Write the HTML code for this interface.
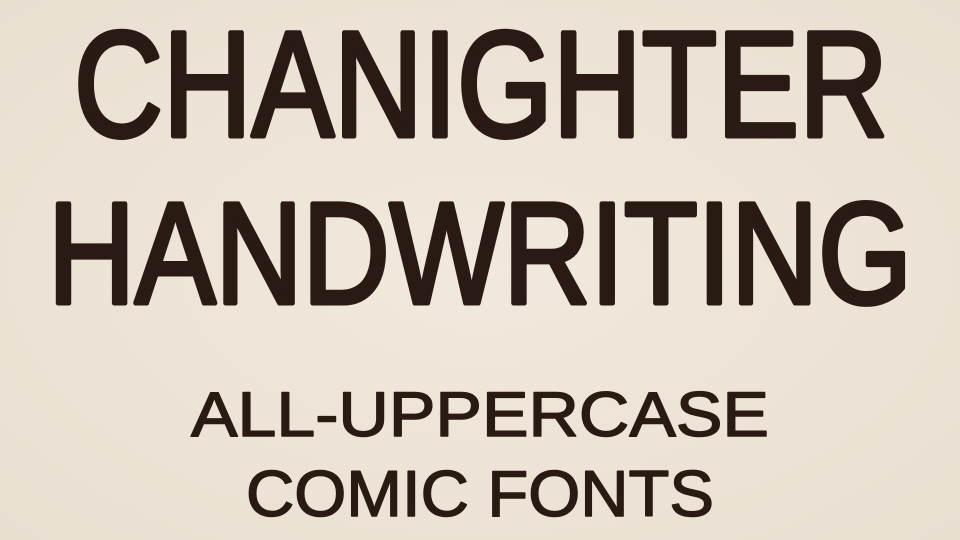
<!DOCTYPE html>
<html><head><meta charset="utf-8"><style>
html,body{margin:0;padding:0;width:960px;height:540px;overflow:hidden;background:#eee5d8}
svg{display:block}
</style></head><body>
<svg width="960" height="540" viewBox="0 0 960 540" xmlns="http://www.w3.org/2000/svg">
<defs>
<radialGradient id="g" cx="50%" cy="50%" r="70%">
<stop offset="0" stop-color="#f1e9dd"/><stop offset="1" stop-color="#e9dfd1"/>
</radialGradient>
</defs>
<rect width="960" height="540" fill="url(#g)"/>
<g font-family="Liberation Sans, sans-serif" fill="#2a1a14" stroke="#2a1a14" stroke-linejoin="round" stroke-linecap="round">
<text x="74" y="136" font-size="150" stroke-width="5" textLength="814" lengthAdjust="spacingAndGlyphs">CHANIGHTER</text>
<text x="48" y="303" font-size="144" stroke-width="5" textLength="864" lengthAdjust="spacingAndGlyphs">HANDWRITING</text>
<text x="191" y="436" font-size="63" stroke-width="1.5" textLength="578" lengthAdjust="spacingAndGlyphs">ALL-UPPERCASE</text>
<text x="246" y="516" font-size="65" stroke-width="1.5" textLength="468" lengthAdjust="spacingAndGlyphs">COMIC FONTS</text>
</g>
</svg>
</body></html>
